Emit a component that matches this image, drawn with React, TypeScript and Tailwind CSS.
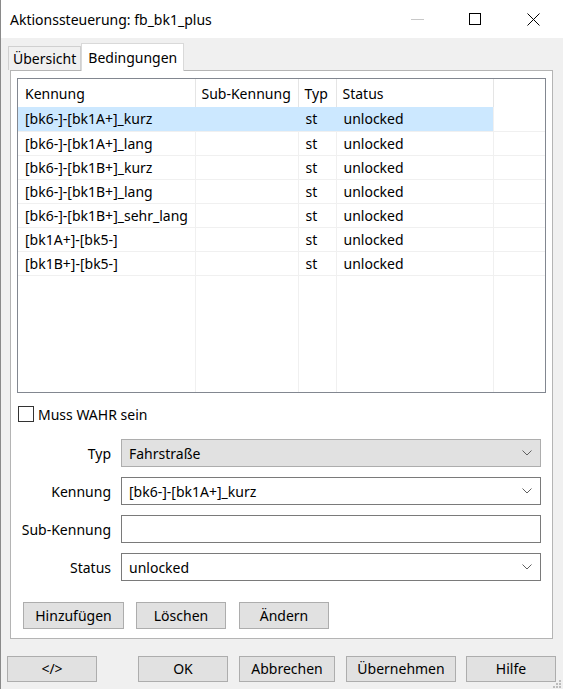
import React from "react";

const rows = [
  { kennung: "[bk6-]-[bk1A+]_kurz", sub: "", typ: "st", status: "unlocked" },
  { kennung: "[bk6-]-[bk1A+]_lang", sub: "", typ: "st", status: "unlocked" },
  { kennung: "[bk6-]-[bk1B+]_kurz", sub: "", typ: "st", status: "unlocked" },
  { kennung: "[bk6-]-[bk1B+]_lang", sub: "", typ: "st", status: "unlocked" },
  { kennung: "[bk6-]-[bk1B+]_sehr_lang", sub: "", typ: "st", status: "unlocked" },
  { kennung: "[bk1A+]-[bk5-]", sub: "", typ: "st", status: "unlocked" },
  { kennung: "[bk1B+]-[bk5-]", sub: "", typ: "st", status: "unlocked" },
];

const Chevron = () => (
  <svg width="10" height="6" viewBox="0 0 10 6" className="shrink-0">
    <path d="M0.5 0.5 L5 5 L9.5 0.5" fill="none" stroke="#606060" strokeWidth="1" />
  </svg>
);

const Combo = ({ value, disabled }: { value: string; disabled?: boolean }) => (
  <div
    className={
      disabled
        ? "h-[28px] w-[420px] flex items-center pl-[7px] pr-[8px] bg-[#e1e1e1] border border-[#adadad]"
        : "h-[28px] w-[420px] flex items-center pl-[7px] pr-[8px] bg-white border border-[#7a7a7a]"
    }
  >
    <span className="flex-1">{value}</span>
    <Chevron />
  </div>
);

const Btn = ({ label, w }: { label: string; w: string }) => (
  <button className={`h-[26px] ${w} bg-[#e1e1e1] border border-[#adadad] text-[14px] leading-none text-black`}>
    {label}
  </button>
);

export default function App() {
  return (
    <div
      className="relative w-[563px] h-[689px] bg-[#f0f0f0] border-l border-[#8a8a8a] flex flex-col text-[14px] text-black overflow-hidden whitespace-nowrap"
      style={{ fontFamily: '"Segoe UI", "Noto Sans", sans-serif' }}
    >
      {/* Title bar */}
      <div className="h-[38px] bg-white flex items-center shrink-0">
        <span className="pl-[9px] text-[14px]">Aktionssteuerung: fb_bk1_plus</span>
        <div className="ml-auto flex h-full mr-[1px]">
          <div className="w-[58px] flex items-center justify-center">
            <div className="w-[13px] h-px bg-[#c8c8c8]" />
          </div>
          <div className="w-[58px] flex items-center justify-center">
            <div className="w-[12px] h-[12px] border border-black" />
          </div>
          <div className="w-[58px] flex items-center justify-center">
            <svg width="13" height="13" viewBox="0 0 13 13">
              <path d="M0.5 0.5 L12.5 12.5 M12.5 0.5 L0.5 12.5" stroke="#000" strokeWidth="1" />
            </svg>
          </div>
        </div>
      </div>

      {/* Tabs */}
      <div className="h-[32px] flex items-end pl-[7px] shrink-0">
        <div className="h-[24px] px-[4px] flex items-center bg-[#f0f0f0] border border-b-0 border-[#d0d0d0]">
          Übersicht
        </div>
        <div className="relative z-10 h-[28px] -mb-px px-[6px] flex items-center bg-white border border-b-0 border-[#d9d9d9]">
          Bedingungen
        </div>
      </div>

      {/* Tab panel */}
      <div className="ml-[9px] w-[543px] h-[569px] bg-white border border-[#b4b4b4] pt-[7px] px-[6px] shrink-0">
        {/* List view */}
        <div className="h-[315px] border border-[#828790] bg-white overflow-hidden">
          <table className="w-full h-full border-collapse table-fixed">
            <colgroup>
              <col className="w-[177px]" />
              <col className="w-[103px]" />
              <col className="w-[38px]" />
              <col className="w-[157px]" />
              <col />
            </colgroup>
            <thead>
              <tr className="h-[28px]">
                <th className="font-normal text-left pl-[7px] border-r border-[#e5e5e5]">Kennung</th>
                <th className="font-normal text-left pl-[6px] border-r border-[#e5e5e5]">Sub-Kennung</th>
                <th className="font-normal text-left pl-[6px] border-r border-[#e5e5e5]">Typ</th>
                <th className="font-normal text-left pl-[6px] border-r border-[#e5e5e5]">Status</th>
                <th />
              </tr>
            </thead>
            <tbody>
              {rows.map((r, i) => {
                const sel = i === 0;
                const cell = sel
                  ? "h-[24px] pl-[7px] bg-[#cce8ff] border-b border-r border-b-[#f0f0f0] border-r-[#cce8ff] overflow-hidden"
                  : "h-[24px] pl-[7px] border-b border-r border-b-[#f0f0f0] border-r-[#f0f0f0] overflow-hidden";
                return (
                  <tr key={i}>
                    <td className={cell}>{r.kennung}</td>
                    <td className={cell}>{r.sub}</td>
                    <td className={cell}>{r.typ}</td>
                    <td className={sel ? "h-[24px] pl-[7px] bg-[#cce8ff] border-b border-r border-b-[#f0f0f0] border-r-[#f0f0f0]" : cell}>
                      {r.status}
                    </td>
                    <td className="border-b border-[#f0f0f0]" />
                  </tr>
                );
              })}
              <tr>
                <td className="border-r border-[#f0f0f0]" />
                <td className="border-r border-[#f0f0f0]" />
                <td className="border-r border-[#f0f0f0]" />
                <td className="border-r border-[#f0f0f0]" />
                <td />
              </tr>
            </tbody>
          </table>
        </div>

        {/* Checkbox */}
        <div className="mt-[12px] flex items-center h-[18px]">
          <div className="ml-[1px] w-[16px] h-[16px] border border-[#333] bg-white" />
          <span className="ml-[4px]">Muss WAHR sein</span>
        </div>

        {/* Form */}
        <div className="mt-[16px] grid grid-cols-[94px_420px] gap-x-[10px] gap-y-[10px] items-center">
          <span className="text-right">Typ</span>
          <Combo value="Fahrstraße" disabled />
          <span className="text-right">Kennung</span>
          <Combo value="[bk6-]-[bk1A+]_kurz" />
          <span className="text-right">Sub-Kennung</span>
          <div className="h-[28px] w-[420px] bg-white border border-[#7a7a7a]" />
          <span className="text-right">Status</span>
          <Combo value="unlocked" />
        </div>

        {/* Action buttons */}
        <div className="mt-[21px] ml-[6px] flex h-[27px]">
          <Btn label="Hinzufügen" w="w-[101px] h-[27px]" />
          <div className="w-[12px]" />
          <Btn label="Löschen" w="w-[90px] h-[27px]" />
          <div className="w-[13px]" />
          <Btn label="Ändern" w="w-[90px] h-[27px]" />
        </div>
      </div>

      {/* Bottom buttons */}
      <div className="mt-[17px] flex pl-[6px]">
        <Btn label="</>" w="w-[90px]" />
        <div className="w-[41px]" />
        <Btn label="OK" w="w-[90px]" />
        <div className="w-[11px]" />
        <Btn label="Abbrechen" w="w-[96px]" />
        <div className="w-[11px]" />
        <Btn label="Übernehmen" w="w-[110px]" />
        <div className="w-[10px]" />
        <Btn label="Hilfe" w="w-[90px]" />
      </div>

      {/* Size grip */}
      <svg className="absolute right-[2px] bottom-[1px]" width="8" height="8" viewBox="0 0 8 8">
        <rect x="6" y="0" width="2" height="2" fill="#bcbcbc" />
        <rect x="3" y="3" width="2" height="2" fill="#bcbcbc" />
        <rect x="6" y="3" width="2" height="2" fill="#bcbcbc" />
        <rect x="0" y="6" width="2" height="2" fill="#bcbcbc" />
        <rect x="3" y="6" width="2" height="2" fill="#bcbcbc" />
        <rect x="6" y="6" width="2" height="2" fill="#bcbcbc" />
      </svg>
    </div>
  );
}
